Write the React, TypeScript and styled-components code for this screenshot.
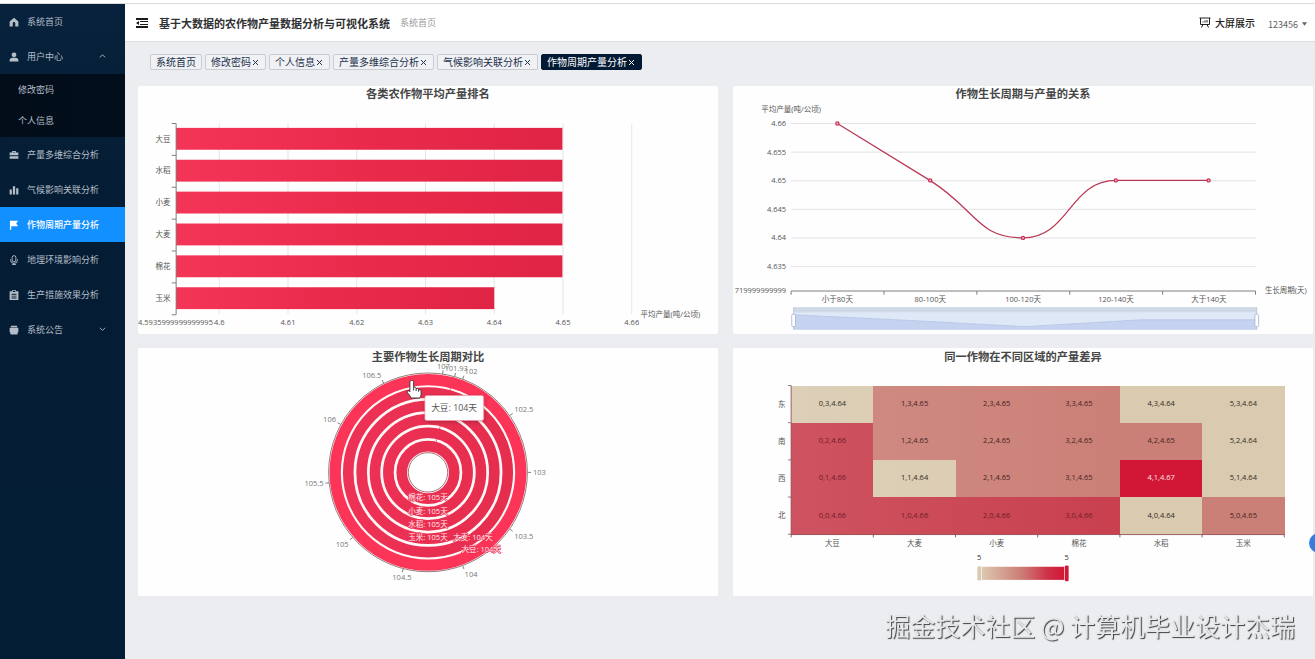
import React from 'react';
import styled, { createGlobalStyle } from 'styled-components';

const GlobalStyle = createGlobalStyle`
  * { box-sizing: border-box; }
  body {
    margin: 0;
    background: #ebedf0;
    font-family: "Noto Sans CJK SC", "Liberation Sans", sans-serif;
  }
  button { font-family: inherit; }
`;

/* ---------- page frame ---------- */

const TopLine = styled.div`
  height: 4px;
  background: #fff;
  border-bottom: 1px solid #dadcde;
`;

const Shell = styled.div`
  display: flex;
  min-height: calc(100vh - 4px);
`;

const Sidebar = styled.nav`
  flex: 0 0 125px;
  background: linear-gradient(180deg, #08223d 0, #051d34 180px, #031d34 100%);
`;

const Main = styled.div`
  flex: 1;
  min-width: 0;
  display: flex;
  flex-direction: column;
`;

/* ---------- sidebar ---------- */

const NavItem = styled.a<{ $active?: boolean }>`
  display: flex;
  align-items: center;
  height: 35px;
  padding: 0 19px 0 9px;
  font-size: 9px;
  font-weight: ${(p) => (p.$active ? 500 : 400)};
  text-decoration: none;
  color: ${(p) => (p.$active ? '#fff' : '#b4bec8')};
  background: ${(p) => (p.$active ? '#1390ff' : 'transparent')};
`;

const NavLabel = styled.span`
  flex: 1;
  margin-left: 8px;
`;

const SubMenu = styled.div`
  padding-bottom: 1px;
  background: linear-gradient(90deg, #020d19, #020e1c);
`;

const SubItem = styled.a`
  display: flex;
  align-items: center;
  height: 31px;
  padding-left: 18px;
  font-size: 9px;
  color: #b4bec8;
  text-decoration: none;
`;

const NavIcon = styled.svg`
  width: 10px;
  height: 10px;
  fill: currentColor;
`;

const Arrow = styled.svg`
  width: 7px;
  height: 7px;
  fill: none;
  stroke: currentColor;
`;

/* ---------- header ---------- */

const Header = styled.header`
  display: flex;
  align-items: center;
  height: 38px;
  padding: 0 8px 0 11px;
  background: #fff;
  border-bottom: 1px solid #dcdee0;
`;

const IconButton = styled.button`
  display: flex;
  padding: 0;
  border: 0;
  background: none;
  color: #1a1a1a;
`;

const Title = styled.h1`
  margin: 0 10px 0 11px;
  font-size: 11px;
  line-height: 16px;
  font-weight: 700;
  color: #303133;
`;

const Crumb = styled.span`
  flex: 1;
  font-size: 9px;
  color: #97999c;
`;

const ScreenButton = styled.button`
  display: flex;
  align-items: center;
  gap: 4px;
  margin-right: 13px;
  padding: 0;
  border: 0;
  background: none;
  font-size: 10px;
  font-weight: 500;
  color: #222;
`;

const UserButton = styled.button`
  display: flex;
  align-items: center;
  gap: 4px;
  padding: 3px 0 0;
  border: 0;
  background: none;
  font-size: 9px;
  color: #606266;
`;

/* ---------- visited page tabs ---------- */

const Tabs = styled.div`
  display: flex;
  gap: 3px;
  padding: 12px 25px 16px;
`;

const Tab = styled.div<{ $active?: boolean }>`
  display: flex;
  align-items: center;
  height: 16px;
  padding: 0 5px;
  border: 1px solid ${(p) => (p.$active ? '#021a33' : '#c9ccd3')};
  border-radius: 2px;
  background: ${(p) => (p.$active ? '#021a33' : '#f0f1f4')};
  color: ${(p) => (p.$active ? '#fff' : '#22304a')};
`;

const TabLink = styled.a`
  font-size: 10px;
  line-height: 14px;
  color: inherit;
  text-decoration: none;
`;

const TabClose = styled.button`
  display: flex;
  align-items: center;
  justify-content: center;
  width: 9px;
  height: 14px;
  padding: 0;
  border: 0;
  background: none;
  color: inherit;
`;

/* ---------- charts ---------- */

const Grid = styled.main`
  display: grid;
  grid-template-columns: 1fr 1fr;
  gap: 14px 15px;
  padding: 0 2px 62px 13px;
`;

const Panel = styled.section`
  background: #fefefe;
  border-radius: 2px;
  overflow: hidden;
`;

const Chart = styled.svg`
  display: block;
  width: 100%;
  height: auto;
  font-family: "Open Sans", "Noto Sans CJK SC", sans-serif;
`;

const ChartTitle = styled.text`
  font-size: 18px;
  font-weight: 700;
  fill: #464646;
  text-anchor: middle;
  dominant-baseline: central;
`;

const Label = styled.text<{ $anchor?: string; $fill?: string; $v?: string }>`
  font-size: 12px;
  fill: ${(p) => p.$fill || '#555'};
  text-anchor: ${(p) => p.$anchor || 'middle'};
  dominant-baseline: ${(p) => p.$v || 'central'};
`;

const BarLabel = styled(Label)`
  fill: #ffe9ec;
  stroke: #ee3154;
  stroke-width: 2px;
  paint-order: stroke;
`;

const TipText = styled.text`
  font-size: 14px;
  fill: #555;
  dominant-baseline: central;
`;

const Watermark = styled.div`
  position: fixed;
  right: 20px;
  bottom: 16px;
  font-size: 25px;
  line-height: 36px;
  color: #e6e7e9;
  text-shadow: 1px 1px 1px #3c3c3c;
  white-space: nowrap;
  pointer-events: none;
`;

const FloatButton = styled.button`
  position: fixed;
  right: -14px;
  bottom: 106px;
  width: 20px;
  height: 20px;
  padding: 0;
  border: 0;
  border-radius: 50%;
  background: #3a7be0;
`;

/* ---------- icons on a 16 unit grid ---------- */

const icons: Record<string, React.ReactNode> = {
  home: <path d="M8 1 1 7v8h5v-5a2 2 0 0 1 4 0v5h5V7z" />,
  user: (
    <>
      <circle cx="8" cy="4.5" r="3.8" />
      <path d="M1 15v-2c0-2.500 2-4 4-4h6c2 0 4 1.500 4 4v2z" />
    </>
  ),
  suitcase: (
    <path d="M5 4V1.500h6V4h4v4.500H1V4zm1.500 0h3V3h-3zM1 9.800h14V14H1z" fillRule="evenodd" />
  ),
  bars: <path d="M1 7h3.500v8H1zM6.200 2h3.600v13H6.200zM11.500 5H15v10h-3.500z" />,
  flag: <path d="M1.500 1h13l-3 4.500 3 4.500h-11v5.500h-2z" />,
  mic: (
    <g fill="none" stroke="currentColor" strokeWidth="1.500">
      <rect x="5" y="1" width="6" height="10" rx="3" />
      <path d="M2.500 7v1.500a5.500 5 0 0 0 11 0V7M8 13.500V15M5 15.200h6" />
    </g>
  ),
  clipboard: (
    <path
      d="M5 0h6v2h4v14H1V2h4zM6 1.300v2h4v-2zM4 6v1.400h8V6zm0 3v1.400h8V9zm0 3v1.400h8V12z"
      fillRule="evenodd"
    />
  ),
  notice: (
    <>
      <path d="M3 1h10v2.500H3zM1 4.500h14v6.500H1z" />
      <path d="M2 11h12v2a2 2 0 0 1-2 2H4a2 2 0 0 1-2-2z" />
    </>
  ),
};

const Icon = ({ name }: { name: string }) => (
  <NavIcon viewBox="0 0 16 16" aria-hidden="true">
    {icons[name]}
  </NavIcon>
);

const Chevron = ({ up }: { up?: boolean }) => (
  <Arrow viewBox="0 0 8 8" aria-hidden="true">
    <path d={up ? 'M1 5l3-3 3 3' : 'M1 2l3 3 3-3'} />
  </Arrow>
);

/* ---------- charts ---------- */

const crops = ['大豆', '水稻', '小麦', '大麦', '棉花', '玉米'];

function YieldRanking() {
  const ticks = [0, 1, 2, 3, 4, 5, 6];
  return (
    <Chart viewBox="0 0 928 397" role="img" aria-label="各类农作物平均产量排名">
      <defs>
        <linearGradient id="bar">
          <stop offset="0" stopColor="#f43558" />
          <stop offset="0.5" stopColor="#e92a4b" />
          <stop offset="1" stopColor="#e02445" />
        </linearGradient>
      </defs>
      <ChartTitle x="464" y="12">各类农作物平均产量排名</ChartTitle>
      {ticks.map((i) => (
        <g key={i}>
          <path d={`M${130 + i * 110} 60V365`} stroke="#e2e3e8" strokeWidth="1.500" />
          <Label x={130 + i * 110} y="378">
            {i ? `4.6${i}` : '4.6'}
          </Label>
        </g>
      ))}
      <Label x="60" y="378">4.5935999999999995</Label>
      {crops.map((c, i) => (
        <g key={c}>
          <rect x="61" y={67 + i * 51} width={i === 5 ? 509 : 618} height="35" fill="url(#bar)" />
          <Label x="52" y={84 + i * 51} $anchor="end">{c}</Label>
        </g>
      ))}
      <path d="M61 60V366" stroke="#777" strokeWidth="1.500" />
      {ticks.map((i) => (
        <path key={i} d={`M54 ${60 + i * 51}h7`} stroke="#777" strokeWidth="1.500" />
      ))}
      <Label x="804" y="364" $anchor="start">平均产量(吨/公顷)</Label>
    </Chart>
  );
}

function CycleYield() {
  const rows = ['4.66', '4.655', '4.65', '4.645', '4.64', '4.635'];
  const cats = ['小于80天', '80-100天', '100-120天', '120-140天', '大于140天'];
  const ys = [60, 151, 243, 151, 151];
  return (
    <Chart viewBox="0 0 928 397" role="img" aria-label="作物生长周期与产量的关系">
      <ChartTitle x="464" y="12">作物生长周期与产量的关系</ChartTitle>
      <Label x="93" y="37">平均产量(吨/公顷)</Label>
      {rows.map((r, i) => (
        <g key={r}>
          <path d={`M93 ${60 + i * 45.8}H836`} stroke="#e0e1e6" strokeWidth="1.500" />
          <Label x="85" y={59 + i * 45.8} $anchor="end">{r}</Label>
        </g>
      ))}
      <Label x="85" y="326" $anchor="end">719999999999</Label>
      <path d="M93 328H836" stroke="#777" strokeWidth="1.500" />
      {[0, 1, 2, 3, 4, 5].map((i) => (
        <path key={i} d={`M${93 + i * 148.6} 328v6`} stroke="#777" strokeWidth="1.500" />
      ))}
      {cats.map((c, i) => (
        <Label key={c} x={167 + i * 148.6} y="340">{c}</Label>
      ))}
      <Label x="851" y="326" $anchor="start">生长周期(天)</Label>
      <path
        d="M167 60L315 151C389 197 390 243 464 243C538 243 538 151 613 151H761"
        fill="none"
        stroke="#b93a55"
        strokeWidth="2"
      />
      {ys.map((y, i) => (
        <circle key={i} cx={167 + i * 148.5} cy={y} r="2.500" fill="#fbd" stroke="#cc2f4f" strokeWidth="2" />
      ))}
      <rect x="97" y="354" width="741" height="36" fill="#dfe8f7" />
      <rect x="97" y="354" width="741" height="8" fill="#cfd8e5" />
      <path d="M97 366L282 375L467 385L653 374H838V390H97Z" fill="#c5d3f0" />
      <path d="M97 366L282 375L467 385L653 374H838" fill="none" stroke="#adbde3" />
      {[97, 838].map((x) => (
        <g key={x}>
          <path d={`M${x} 354v36`} stroke="#acb8d1" />
          <rect x={x - 3} y="365" width="6" height="20" rx="2" fill="#fff" stroke="#8f9fc0" />
        </g>
      ))}
    </Chart>
  );
}

function CycleCompare() {
  const cx = 464;
  const cy = 199;
  const values = [101.93, 102, 102.5, 103, 103.5, 104, 104.5, 105, 105.5, 106, 106.5, 107];
  const labels: [string, number, number][] = [
    ['棉花: 105天', 464, 239],
    ['小麦: 105天', 464, 260],
    ['水稻: 105天', 464, 282],
    ['玉米: 105天', 464, 303],
    ['大麦: 104天', 536, 303],
    ['大豆: 104天', 549, 321],
  ];
  return (
    <Chart viewBox="0 0 928 397" role="img" aria-label="主要作物生长周期对比">
      <defs>
        <linearGradient id="ring" gradientUnits="userSpaceOnUse" x1="320" y1="0" x2="608" y2="0">
          <stop offset="0" stopColor="#ee3256" />
          <stop offset="1" stopColor="#e52d4d" />
        </linearGradient>
        <filter id="tipShadow" x="-20%" y="-20%" width="150%" height="160%">
          <feDropShadow dx="1" dy="2" stdDeviation="3" floodOpacity="0.25" />
        </filter>
      </defs>
      <ChartTitle x="464" y="13">主要作物生长周期对比</ChartTitle>
      {values.map((v) => {
        const a = ((v - 103) * 69.6 * Math.PI) / 180;
        const c = Math.cos(a);
        const s = Math.sin(a);
        const anchor = Math.abs(c) < 0.3 ? 'middle' : c > 0 ? 'start' : 'end';
        const base = Math.abs(s) < 0.3 ? 'central' : s > 0 ? 'hanging' : 'auto';
        return (
          <g key={v}>
            <path
              d={`M${cx + c * 159} ${cy + s * 159}L${cx + c * 165} ${cy + s * 165}`}
              stroke="#777"
              strokeWidth="1.500"
            />
            <Label x={cx + c * 168} y={cy + s * 168} $anchor={anchor} $v={base} $fill="#777">
              {v}
            </Label>
          </g>
        );
      })}
      <circle cx={cx} cy={cy} r="159" fill="#fff8f6" stroke="#8b7476" strokeWidth="1.500" />
      <path d={`M${cx + 8} ${cy - 31}L${cx + 41} ${cy - 153}`} stroke="#d0808c" strokeWidth="1.500" />
      {[0, 1, 2, 3, 4].map((i) => (
        <circle
          key={i}
          cx={cx}
          cy={cy}
          r={42 + i * 21.4}
          fill="none"
          stroke="url(#ring)"
          strokeWidth="17"
        />
      ))}
      <circle cx={cx} cy={cy} r="148.500" fill="none" stroke="#fc3458" strokeWidth="18" />
      <circle cx={cx} cy={cy} r="31.500" fill="#fff" stroke="#a3696f" strokeWidth="1.500" />
      {labels.map(([t, x, y]) => (
        <BarLabel key={t} x={x} y={y}>{t}</BarLabel>
      ))}
      <rect
        x="459"
        y="76"
        width="94"
        height="40"
        rx="3"
        fill="#fff"
        stroke="#f08a9c"
        filter="url(#tipShadow)"
      />
      <TipText x="469" y="96">大豆: 104天</TipText>
      <path
        d="M438 52c2 0 3 1 3 3v8c2-1 4 0 4 2 2-1 4 0 4 2 2-1 4 0 4 3v4c0 2-1 4-2 6H437c-1-3-4-6-6-9-1-2 1-3 3-2l1 1V55c0-2 1-3 3-3zM441 63v5M445 65v4M449 67v3"
        fill="#fff"
        stroke="#333"
        strokeWidth="1.500"
        strokeLinejoin="round"
      />
    </Chart>
  );
}

function RegionHeatmap() {
  const cols = ['大豆', '大麦', '小麦', '棉花', '水稻', '玉米'];
  const rows = ['东', '南', '西', '北'];
  const data = [
    [4, 5, 5, 5, 4, 4],
    [6, 5, 5, 5, 5, 4],
    [6, 4, 5, 5, 7, 4],
    [6, 6, 6, 6, 4, 5],
  ];
  const fills: Record<number, string> = { 4: '#dacab0', 5: '#cb8077', 6: '#c9404f', 7: '#d11735' };
  const inks: Record<number, string> = { 4: '#332a22', 5: '#43221f', 6: '#6e1d28', 7: '#ffe6e6' };
  return (
    <Chart viewBox="0 0 928 397" role="img" aria-label="同一作物在不同区域的产量差异">
      <defs>
        <linearGradient id="scale">
          <stop offset="0" stopColor="#dcc8b0" />
          <stop offset="0.5" stopColor="#cc7a73" />
          <stop offset="0.8" stopColor="#cf3048" />
          <stop offset="1" stopColor="#d11735" />
        </linearGradient>
        <linearGradient id="sheen">
          <stop offset="0" stopColor="#fff" stopOpacity="0.1" />
          <stop offset="1" stopColor="#fff" stopOpacity="0" />
        </linearGradient>
      </defs>
      <ChartTitle x="464" y="13">同一作物在不同区域的产量差异</ChartTitle>
      <g shapeRendering="crispEdges">
        {data.map((row, r) =>
          row.map((v, c) => (
            <rect
              key={`${r}-${c}`}
              x={93 + c * 131.5}
              y={60 + r * 59.5}
              width="132"
              height="60"
              fill={fills[v]}
            />
          ))
        )}
        <rect x="93" y="60" width="526" height="238" fill="url(#sheen)" />
      </g>
      {data.map((row, r) =>
        row.map((v, c) => (
          <Label key={`${r}-${c}`} x={159 + c * 131.5} y={88 + r * 59.5} $fill={inks[v]}>
            {`${c},${3 - r},4.6${v}`}
          </Label>
        ))
      )}
      <path d="M93 60V298.500H882" fill="none" stroke="#9a5a60" strokeWidth="1.500" />
      {rows.map((t, i) => (
        <Label key={t} x="84" y={89 + i * 59.5} $anchor="end">{t}</Label>
      ))}
      {[0, 1, 2, 3, 4].map((i) => (
        <path key={i} d={`M88 ${60 + i * 59.5}h5`} stroke="#777" strokeWidth="1.500" />
      ))}
      {cols.map((t, i) => (
        <Label key={t} x={159 + i * 131.5} y="312">{t}</Label>
      ))}
      {[0, 1, 2, 3, 4, 5, 6].map((i) => (
        <path key={i} d={`M${93 + i * 131.5} 298v5`} stroke="#a04a55" strokeWidth="1.500" />
      ))}
      <Label x="394" y="334" $fill="#333">5</Label>
      <Label x="534" y="334" $fill="#333">5</Label>
      <rect x="398" y="350" width="132" height="21" fill="url(#scale)" />
      <rect x="391" y="349" width="6" height="23" rx="2" fill="#d9cbb3" />
      <rect x="531" y="348" width="6" height="25" rx="2" fill="#d11735" />
    </Chart>
  );
}

const tabs = ['系统首页', '修改密码', '个人信息', '产量多维综合分析', '气候影响关联分析', '作物周期产量分析'];

const nav: [string, string][] = [
  ['suitcase', '产量多维综合分析'],
  ['bars', '气候影响关联分析'],
  ['flag', '作物周期产量分析'],
  ['mic', '地理环境影响分析'],
  ['clipboard', '生产措施效果分析'],
];

export default function App() {
  return (
    <>
      <GlobalStyle />
      <TopLine />
      <Shell>
        <Sidebar>
          <NavItem href="#home">
            <Icon name="home" />
            <NavLabel>系统首页</NavLabel>
          </NavItem>
          <NavItem href="#users">
            <Icon name="user" />
            <NavLabel>用户中心</NavLabel>
            <Chevron up />
          </NavItem>
          <SubMenu>
            <SubItem href="#password">修改密码</SubItem>
            <SubItem href="#profile">个人信息</SubItem>
          </SubMenu>
          {nav.map(([icon, label]) => (
            <NavItem key={icon} href={`#${icon}`} $active={icon === 'flag'}>
              <Icon name={icon} />
              <NavLabel>{label}</NavLabel>
            </NavItem>
          ))}
          <NavItem href="#notice">
            <Icon name="notice" />
            <NavLabel>系统公告</NavLabel>
            <Chevron />
          </NavItem>
        </Sidebar>
        <Main>
          <Header>
            <IconButton aria-label="折叠菜单">
              <svg width="12" height="10" viewBox="0 0 12 10" fill="currentColor">
                <path d="M0 0h12v2H0zM4 3h8v1H4zM4 6h8v1H4zM0 8h12v2H0zM0 5l3-2v4z" />
              </svg>
            </IconButton>
            <Title>基于大数据的农作物产量数据分析与可视化系统</Title>
            <Crumb>系统首页</Crumb>
            <ScreenButton>
              <svg width="12" height="11" viewBox="0 0 24 22" fill="none" stroke="currentColor" strokeWidth="2">
                <path d="M1 2h22M3 2v13h18V2M8 15l-3 6M16 15l3 6M8 11V9M12 11V7M16 11V6" />
              </svg>
              大屏展示
            </ScreenButton>
            <UserButton>
              123456
              <svg width="5" height="4" viewBox="0 0 6 4" fill="currentColor" aria-hidden="true">
                <path d="M0 0h6L3 4z" />
              </svg>
            </UserButton>
          </Header>
          <Tabs>
            {tabs.map((t, i) => (
              <Tab key={t} $active={i === 5}>
                <TabLink href={`#tab-${i}`}>{t}</TabLink>
                {i > 0 && (
                  <TabClose aria-label={`关闭${t}`}>
                    <svg width="7" height="7" viewBox="0 0 7 7" stroke="currentColor" aria-hidden="true">
                      <path d="M1 1l5 5M6 1L1 6" />
                    </svg>
                  </TabClose>
                )}
              </Tab>
            ))}
          </Tabs>
          <Grid>
            <Panel><YieldRanking /></Panel>
            <Panel><CycleYield /></Panel>
            <Panel><CycleCompare /></Panel>
            <Panel><RegionHeatmap /></Panel>
          </Grid>
        </Main>
      </Shell>
      <FloatButton aria-label="助手" />
      <Watermark>掘金技术社区 @ 计算机毕业设计杰瑞</Watermark>
    </>
  );
}
